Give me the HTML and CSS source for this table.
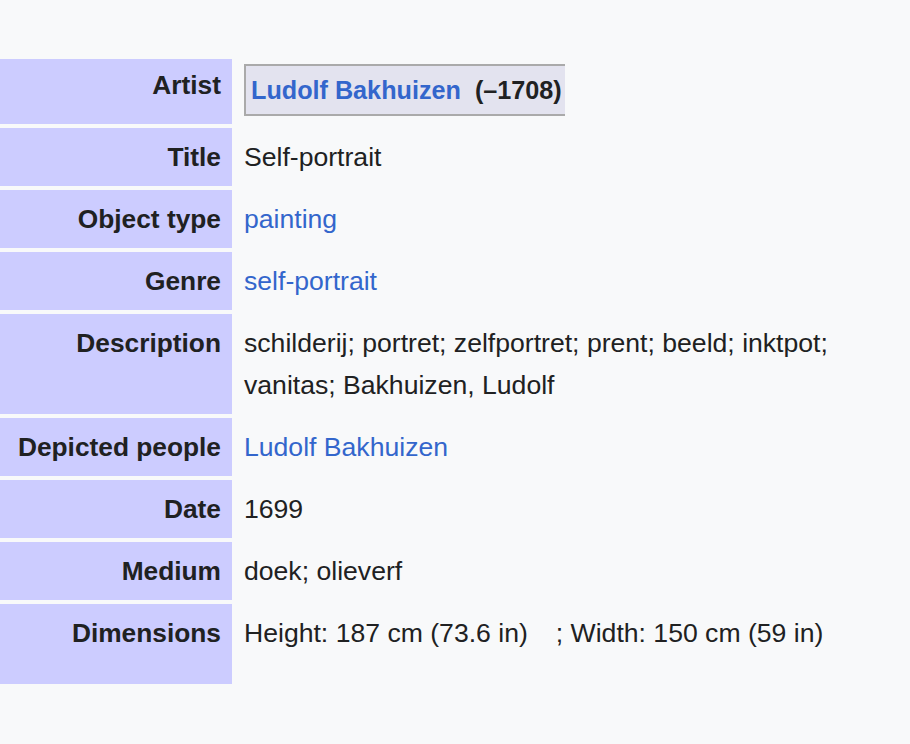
FILE: index.html
```html
<!DOCTYPE html>
<html lang="en">
<head>
<meta charset="utf-8">
<title>Self-portrait – Ludolf Bakhuizen</title>
<link rel="stylesheet" href="styles.css">
</head>
<body>
<table class="info">
  <tbody>
    <tr class="row-artist">
      <th>Artist</th>
      <td>
        <div class="creator"><a class="link bold" href="#">Ludolf Bakhuizen</a>&nbsp; (–1708)</div>
      </td>
    </tr>
    <tr>
      <th>Title</th>
      <td>Self-portrait</td>
    </tr>
    <tr>
      <th>Object type</th>
      <td><a class="link" href="#">painting</a></td>
    </tr>
    <tr>
      <th>Genre</th>
      <td><a class="link" href="#">self-portrait</a></td>
    </tr>
    <tr>
      <th>Description</th>
      <td>schilderij; portret; zelfportret; prent; beeld; inktpot; vanitas; Bakhuizen, Ludolf</td>
    </tr>
    <tr>
      <th>Depicted people</th>
      <td><a class="link" href="#">Ludolf Bakhuizen</a></td>
    </tr>
    <tr>
      <th>Date</th>
      <td>1699</td>
    </tr>
    <tr>
      <th>Medium</th>
      <td>doek; olieverf</td>
    </tr>
    <tr class="row-dim">
      <th>Dimensions</th>
      <td>Height: 187 cm (73.6 in)<span class="dim-gap"></span>; Width: 150 cm (59 in)</td>
    </tr>
  </tbody>
</table>
</body>
</html>
```

FILE: styles.css
```css
html, body {
  margin: 0;
  padding: 0;
  background: #f8f9fa;
}

body {
  padding-top: 55px;
  font-family: "Liberation Sans", Arial, sans-serif;
  font-size: 26.6px;
  line-height: 42px;
  color: #202122;
}

.info {
  width: 100%;
  border-collapse: separate;
  border-spacing: 0 4px;
}

.info th {
  width: 232px;
  box-sizing: border-box;
  background: #ccccff;
  text-align: right;
  vertical-align: top;
  font-weight: bold;
  font-size: 26.3px;
  white-space: nowrap;
  padding: 8px 11px 8px 0;
}

.info td {
  vertical-align: top;
  padding: 8px 20px 8px 12px;
}

.row-artist th,
.row-artist td {
  padding-top: 5px;
}

.row-dim th,
.row-dim td {
  padding-bottom: 30px;
}

.link {
  color: #3366cc;
  text-decoration: none;
}

.bold {
  font-weight: bold;
}

.creator {
  display: inline-block;
  font-size: 25.2px;
  line-height: 40px;
  font-weight: bold;
  background: #e3e3ef;
  border: 2px solid #aaaaaa;
  border-right: none;
  padding: 4px 3px 4px 5px;
}

.dim-gap {
  display: inline-block;
  width: 28px;
}
```
